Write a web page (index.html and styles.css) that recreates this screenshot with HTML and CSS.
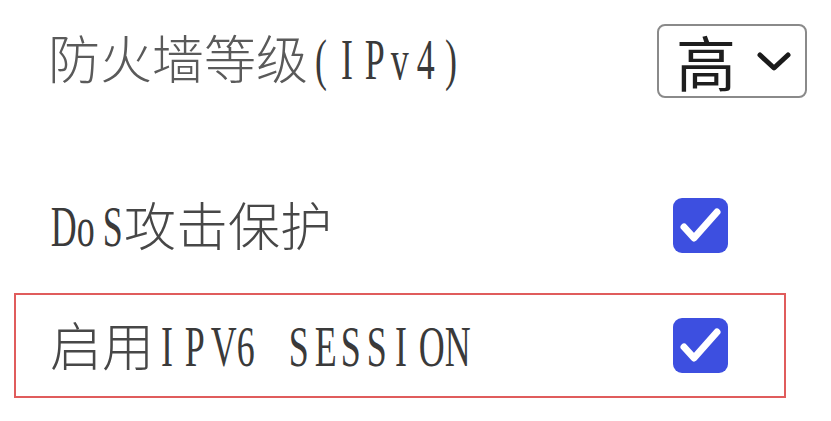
FILE: index.html
```html
<!DOCTYPE html>
<html lang="zh-CN">
<head>
<meta charset="utf-8">
<title>防火墙设置</title>
<link rel="stylesheet" href="styles.css">
</head>
<body>
<div class="settings">
  <div class="row row-level">
    <span class="label">防火墙等级<span class="m">(</span><span class="m">I</span><span class="m">P</span><span class="m">v</span><span class="m">4</span><span class="m">)</span></span>
    <div class="select">
      <span class="select-value">高</span>
      <svg class="chevron" width="36" height="24" viewBox="0 0 36 24"><path d="M4 5 L18 18 L32 5" fill="none" stroke="#1a1a1a" stroke-width="5" stroke-linecap="round" stroke-linejoin="round"/></svg>
    </div>
  </div>
  <div class="row row-dos">
    <span class="label"><span class="m">D</span><span class="m">o</span><span class="m">S</span>攻击保护</span>
    <span class="check"><svg width="55" height="55" viewBox="0 0 55 55"><path d="M11 29 L21 40 L44 14" fill="none" stroke="#ffffff" stroke-width="7" stroke-linecap="round" stroke-linejoin="round"/></svg></span>
  </div>
  <div class="row row-v6">
    <span class="label">启用<span class="m">I</span><span class="m">P</span><span class="m">V</span><span class="m">6</span><span class="m">&nbsp;</span><span class="m">S</span><span class="m">E</span><span class="m">S</span><span class="m">S</span><span class="m">I</span><span class="m">O</span><span class="m">N</span></span>
    <span class="check"><svg width="55" height="55" viewBox="0 0 55 55"><path d="M11 29 L21 40 L44 14" fill="none" stroke="#ffffff" stroke-width="7" stroke-linecap="round" stroke-linejoin="round"/></svg></span>
  </div>
</div>
</body>
</html>
```
FILE: styles.css
```css
html, body {
  margin: 0;
  padding: 0;
  background: #ffffff;
}
.settings {
  width: 831px;
  height: 421px;
  padding-top: 24px;
  box-sizing: border-box;
  font-family: "Noto Sans CJK SC", "Noto Sans", sans-serif;
  color: #3c3c3c;
}
.row {
  display: flex;
  align-items: center;
  justify-content: space-between;
  box-sizing: border-box;
}
.label {
  font-size: 52px;
  line-height: 60px;
  font-weight: 300;
  white-space: nowrap;
  color: #474747;
}
.m {
  display: inline-block;
  width: 26px;
  text-align: center;
  font-family: "Liberation Serif", "DejaVu Serif", serif;
  font-size: 57px;
  font-weight: 400;
  color: #3a3a3a;
  transform: scaleX(0.63);
  transform-origin: 50% 50%;
}
.row-level {
  height: 74px;
  padding-left: 48px;
  padding-right: 24px;
}
.row-level .label {
  color: #5a5a5a;
  margin-top: -6px;
}
.select {
  width: 150px;
  height: 74px;
  box-sizing: border-box;
  border: 2px solid #8a8a8a;
  border-radius: 8px;
  display: flex;
  align-items: center;
  padding-left: 17px;
  gap: 20px;
}
.select-value {
  font-size: 60px;
  line-height: 60px;
  color: #1e1e1e;
  font-weight: 400;
}
.chevron {
  display: block;
  margin-top: 2px;
}
.row-dos {
  margin-top: 100px;
  height: 55px;
  padding-left: 46px;
  padding-right: 103px;
}
.row-v6 {
  margin-top: 40px;
  margin-left: 14px;
  width: 772px;
  height: 105px;
  border: 2px solid #e05c5c;
  padding-left: 34px;
  padding-right: 56px;
}
.check {
  width: 55px;
  height: 55px;
  border-radius: 9px;
  background: #3d4fe0;
  display: block;
}
.check svg {
  display: block;
}
```
